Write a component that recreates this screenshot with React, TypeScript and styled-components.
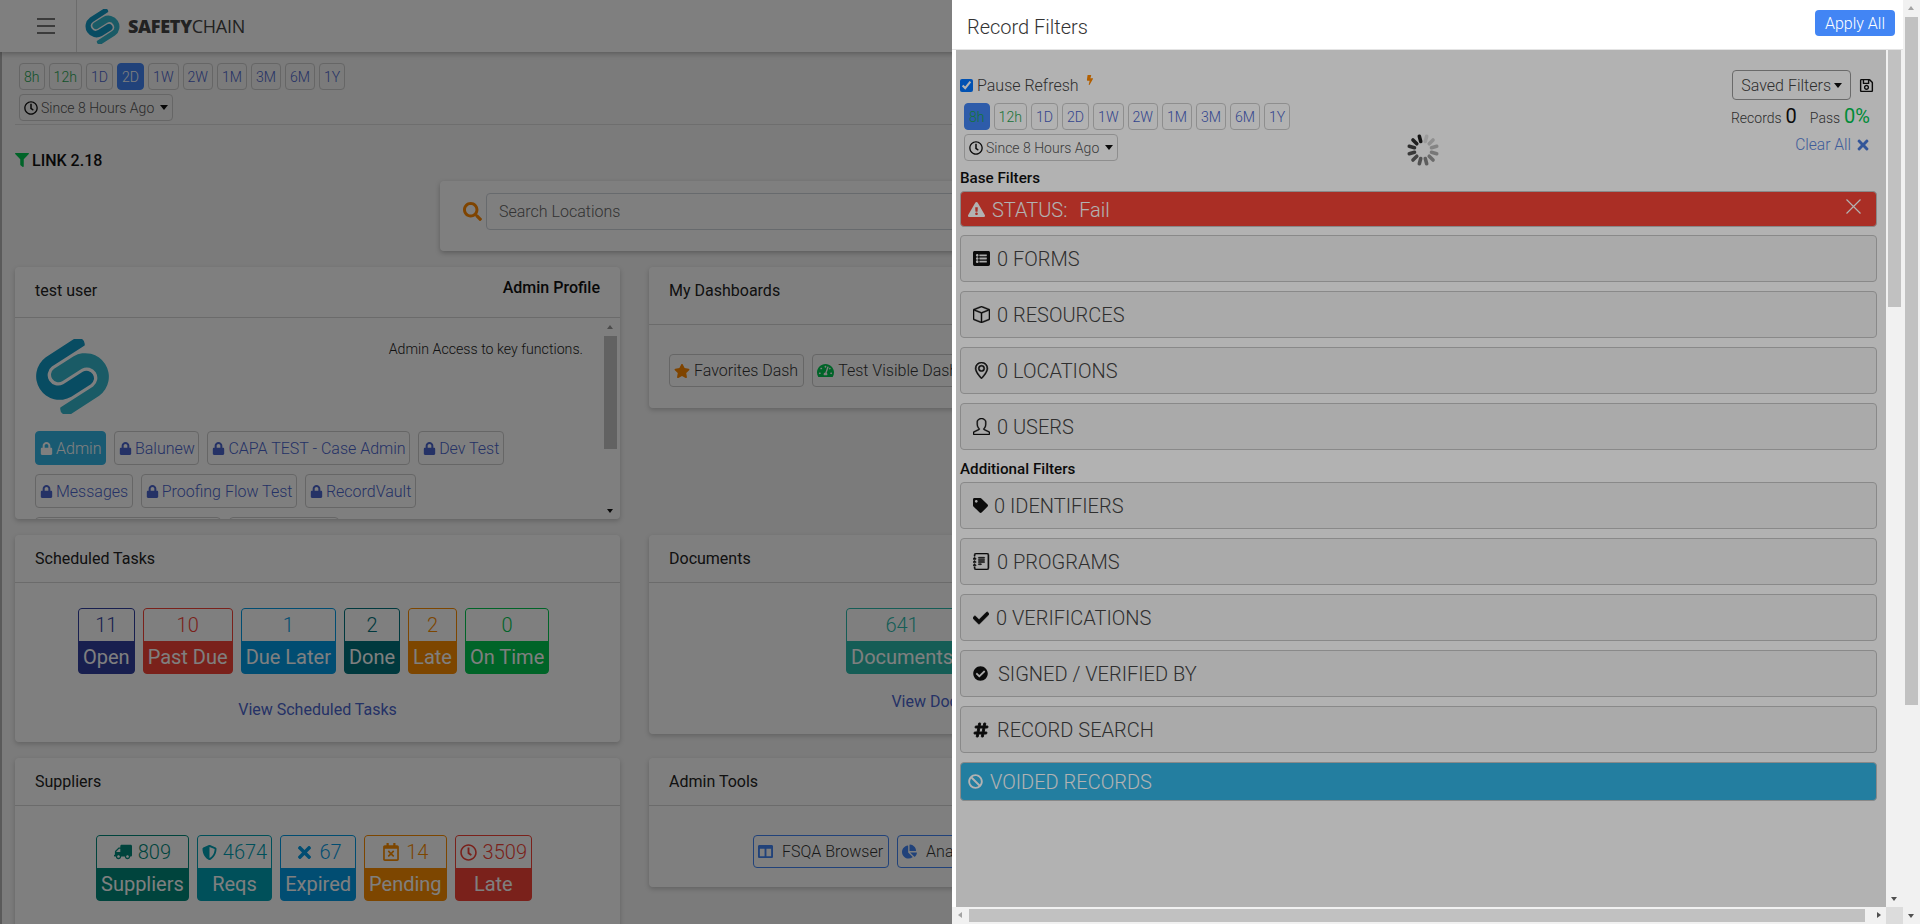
import React from "react";
import styled, { createGlobalStyle } from "styled-components";
import {
  FaLock, FaSearch, FaFilter, FaStar, FaTachometerAlt, FaTruck, FaShieldAlt, FaTimes,
  FaRegCalendarTimes, FaRegClock, FaRegSave, FaBolt, FaExclamationTriangle, FaListAlt,
  FaTag, FaCheck, FaCheckCircle, FaHashtag, FaBan, FaChartPie, FaColumns,
} from "react-icons/fa";
import { BsBox, BsGeoAlt, BsJournalText } from "react-icons/bs";
import { SlUser } from "react-icons/sl";

const Global = createGlobalStyle`
  html, body { margin: 0; padding: 0; height: 100%; overflow: hidden; }
  body { font-family: Roboto, "Liberation Sans", sans-serif; font-size: 16px; color: #212529; }
  * { box-sizing: border-box; }
`;

const BLUE = "#4a64cc";

const Root = styled.div`
  display: flex;
  width: 1920px;
  height: 924px;
  overflow: hidden;
`;
const Main = styled.div`
  position: relative;
  flex: 1;
  overflow: hidden;
  background: #f6f6f6;
`;
const TopBar = styled.header`
  display: flex;
  align-items: center;
  height: 52px;
  background: #fff;
  box-shadow: 0 2px 5px rgba(0, 0, 0, 0.25);
  position: relative;
`;
const MenuCell = styled.div`
  display: flex;
  flex-direction: column;
  justify-content: center;
  gap: 5px;
  width: 77px;
  height: 52px;
  padding-left: 37px;
  padding-right: 21px;
  border-right: 1px solid #d8d8d8;
  span { display: block; height: 2px; background: #777; }
`;
const Brand = styled.div`
  display: flex;
  align-items: center;
  gap: 8px;
  margin-left: 8px;
  font-family: "Open Sans", sans-serif;
  font-size: 18px;
  letter-spacing: -0.3px;
  color: #444;
  font-weight: 400;
  b { font-weight: 800; }
`;
const Content = styled.div`
  border-left: 2px solid #b4b4b4;
  padding-left: 13px;
  height: 872px;
`;
const RangeRow = styled.div<{ $top: number }>`
  display: flex;
  gap: 4px;
  padding: ${(p) => p.$top}px 0 0 4px;
`;
const RangeBtn = styled.div<{ $active?: boolean; $green?: boolean; $onActive?: string }>`
  display: flex;
  align-items: center;
  height: 27px;
  padding: 0 4px;
  border: 1px solid ${(p) => (p.$active ? "#4285f4" : "#ccc")};
  border-radius: 4px;
  font-size: 14.1px;
  font-weight: 300;
  background: ${(p) => (p.$active ? "#4285f4" : "transparent")};
  color: ${(p) => p.$onActive || (p.$active ? "#fff" : p.$green ? "#1fa552" : BLUE)};
`;
const SinceBtn = styled.div`
  display: inline-flex;
  align-items: center;
  gap: 3px;
  height: 27px;
  margin: 4px 0 0 4px;
  padding: 0 4px;
  border: 1px solid #ccc;
  border-radius: 4px;
  font-size: 14px;
  font-weight: 300;
  color: #555;
  svg { color: #111; }
`;
const Caret = styled.i`
  display: inline-block;
  width: 0;
  height: 0;
  margin-left: 3px;
  border-left: 4.5px solid transparent;
  border-right: 4.5px solid transparent;
  border-top: 5px solid #111;
`;
const HRule = styled.div`
  height: 1px;
  margin-top: 3px;
  background: #dcdcdc;
`;
const LinkRow = styled.div`
  display: flex;
  align-items: center;
  gap: 3px;
  height: 20px;
  margin-top: 25px;
  font-size: 16px;
  font-weight: 500;
  color: #111;
  svg { color: #00c851; }
`;
const SearchCard = styled.div`
  display: flex;
  align-items: center;
  gap: 4px;
  width: 1023px;
  height: 70px;
  margin: 11px 0 0 425px;
  padding: 0 23px 9px;
  background: #fff;
  border-radius: 4px;
  box-shadow: 0 2px 5px rgba(0, 0, 0, 0.25);
  svg { color: #ff8800; }
`;
const SearchBox = styled.div`
  flex: 1;
  display: flex;
  align-items: center;
  height: 37px;
  padding-left: 12px;
  border: 1px solid #ced4da;
  border-radius: 4px;
  font-size: 16px;
  font-weight: 300;
  color: #666;
`;
const Grid = styled.div`
  display: grid;
  grid-template-columns: 605px 605px;
  column-gap: 29px;
  row-gap: 16px;
  align-items: start;
  margin-top: 16px;
`;
const Card = styled.section<{ $height?: number }>`
  background: #fff;
  border-radius: 4px;
  box-shadow: 0 2px 5px rgba(0, 0, 0, 0.2);
  overflow: hidden;
  ${(p) => (p.$height ? `height: ${p.$height}px;` : "")}
`;
const CardHead = styled.div<{ $height: number }>`
  display: flex;
  justify-content: space-between;
  height: ${(p) => p.$height}px;
  padding: 12px 20px 0;
  border-bottom: 1px solid #d6d6d6;
  font-size: 16px;
  font-weight: 400;
  line-height: 24px;
  color: #222;
  b { font-weight: 500; font-size: 16px; line-height: 18px; margin-right: 0; color: #111; }
`;
const ProfileBody = styled.div`
  position: relative;
  display: flex;
  height: 201px;
  overflow: hidden;
`;
const ProfileMain = styled.div`
  flex: 1;
  padding: 21px 0 0 20px;
`;
const ProfileTop = styled.div`
  display: flex;
  justify-content: space-between;
  padding-right: 19px;
`;
const ProfileNote = styled.div`
  margin-top: 0;
  font-size: 14.2px;
  font-weight: 300;
  line-height: 20px;
  color: #222;
`;
const AppWrap = styled.div`
  display: flex;
  flex-wrap: wrap;
  gap: 9px 8px;
  margin-top: 17px;
  padding-right: 30px;
`;
const AppBtn = styled.div<{ $active?: boolean }>`
  display: flex;
  align-items: center;
  gap: 3px;
  height: 34px;
  padding: 0 3.5px 0 4px;
  border: 1px solid ${(p) => (p.$active ? "#33b5e5" : "#ccc")};
  border-radius: 4px;
  background: ${(p) => (p.$active ? "#33b5e5" : "transparent")};
  color: ${(p) => (p.$active ? "#fff" : BLUE)};
  font-size: 16px;
  font-weight: 300;
`;
const MiniBar = styled.div`
  position: relative;
  width: 18px;
  padding: 18px 3px 0 2px;
`;
const MiniThumb = styled.div`
  height: 113px;
  background: #c4c4c4;
`;
const MiniArrow = styled.i<{ $down?: boolean }>`
  position: absolute;
  left: 5px;
  ${(p) => (p.$down ? "bottom: 6px;" : "top: 7px;")}
  width: 0;
  height: 0;
  border-left: 3.5px solid transparent;
  border-right: 3.5px solid transparent;
  ${(p) => (p.$down ? "border-top: 4px solid #111;" : "border-bottom: 4px solid #999;")}
`;
const StatBody = styled.div<{ $left: number; $bottom: number; $top?: number }>`
  padding: ${(p) => p.$top ?? 25}px 0 ${(p) => p.$bottom}px ${(p) => p.$left}px;
`;
const StatRow = styled.div`
  display: flex;
  gap: 8px;
`;
const Stat = styled.div<{ $c: string }>`
  display: flex;
  flex-direction: column;
  border: 1px solid ${(p) => p.$c};
  border-radius: 4px;
  overflow: hidden;
  color: ${(p) => p.$c};
  font-size: 20px;
  text-align: center;
  background: ${(p) => p.$c};
`;
const StatTop = styled.div`
  display: flex;
  align-items: center;
  justify-content: center;
  gap: 6px;
  height: 32px;
  padding: 0 4px;
  background: #fff;
  font-weight: 300;
`;
const FlippedTruck = styled(FaTruck)`
  transform: scaleX(-1);
`;
const StatLabel = styled.div`
  height: 32px;
  line-height: 32px;
  padding: 0 4px;
  color: #fff;
  font-weight: 400;
`;
const CenterLink = styled.div<{ $top: number }>`
  margin-top: ${(p) => p.$top}px;
  text-align: center;
  color: ${BLUE};
  font-size: 16px;
  font-weight: 400;
  line-height: 20px;
`;
const LinkBody = styled.div<{ $bottom: number }>`
  padding-bottom: ${(p) => p.$bottom}px;
`;
const ToolRow = styled.div<{ $top: number; $left: number; $bottom: number }>`
  display: flex;
  gap: 8px;
  padding: ${(p) => p.$top}px 0 ${(p) => p.$bottom}px ${(p) => p.$left}px;
`;
const ToolBtn = styled.div<{ $line?: string; $icon?: string; $gap: number }>`
  display: flex;
  align-items: center;
  gap: ${(p) => p.$gap}px;
  height: 33px;
  padding: 0 5px 0 4px;
  border: 1px solid ${(p) => p.$line || "#ccc"};
  border-radius: 4px;
  font-size: 16px;
  font-weight: 300;
  white-space: nowrap;
  color: #333;
  svg { color: ${(p) => p.$icon || "#333"}; }
`;
const Dim = styled.div`
  position: absolute;
  inset: 0;
  background: rgba(0, 0, 0, 0.5);
`;
const Drawer = styled.aside`
  position: absolute;
  top: 0;
  right: 0;
  bottom: 0;
  width: 951px;
  display: flex;
  flex-direction: column;
  background: #fff;
`;
const DrawerHead = styled.div`
  display: flex;
  align-items: center;
  justify-content: space-between;
  height: 50px;
  flex: none;
  padding: 0 8px 0 15px;
  border-bottom: 1px solid #e4e4e4;
  h2 { margin: 4px 0 0; font-size: 20px; font-weight: 300; color: #333; }
`;
const ApplyBtn = styled.div`
  display: flex;
  align-items: center;
  justify-content: center;
  width: 80px;
  height: 26px;
  margin-bottom: 3px;
  border-radius: 4px;
  background: #4285f4;
  color: #fff;
  font-size: 16px;
  font-weight: 300;
`;
const DrawerMiddle = styled.div`
  flex: 1;
  min-height: 0;
  display: flex;
  padding-left: 4px;
`;
const DrawerPane = styled.div`
  position: relative;
  flex: 1;
  overflow: hidden;
  padding: 0 9px 0 4px;
`;
const PaneShade = styled.div`
  position: absolute;
  inset: 0;
  background: rgba(0, 0, 0, 0.3);
`;
const SpinnerBox = styled.div`
  position: absolute;
  left: 450px;
  top: 83px;
  width: 34px;
  height: 34px;
`;
const TopSplit = styled.div`
  display: flex;
  justify-content: space-between;
`;
const LeftCol = styled.div`
  padding-top: 25px;
`;
const PauseRow = styled.label`
  display: flex;
  align-items: center;
  gap: 4px;
  height: 20px;
  font-size: 16px;
  font-weight: 300;
  color: #444;
  input { width: 13px; height: 13px; margin: 0; }
  svg { color: #ff8800; margin: -10px 0 0 2px; }
`;
const RightCol = styled.div`
  display: flex;
  flex-direction: column;
  align-items: flex-end;
  padding: 20px 3px 0 0;
`;
const SavedRow = styled.div`
  display: flex;
  align-items: center;
  gap: 8px;
  svg { color: #111; }
`;
const SavedBtn = styled.div`
  display: flex;
  align-items: center;
  height: 30px;
  padding: 0 8px;
  border: 1px solid #999;
  border-radius: 4px;
  font-size: 16px;
  font-weight: 300;
  color: #444;
`;
const CountRow = styled.div`
  display: flex;
  align-items: baseline;
  gap: 4px;
  margin: 2px 4px 0 0;
  font-size: 14px;
  font-weight: 300;
  color: #444;
  line-height: 28px;
`;
const CountVal = styled.span<{ $green?: boolean }>`
  font-size: 20px;
  font-weight: 400;
  margin-right: 9px;
  color: ${(p) => (p.$green ? "#00c851" : "#111")};
  &:last-child { margin-right: 0; }
`;
const ClearRow = styled.div`
  display: flex;
  align-items: center;
  gap: 4px;
  margin: 4px 3px 0 0;
  font-size: 15.6px;
  font-weight: 300;
  color: #5b86dd;
  svg { color: #4a7bdc; }
`;
const GroupLabel = styled.div<{ $top: number; $bottom: number }>`
  height: 20px;
  line-height: 20px;
  margin: ${(p) => p.$top}px 0 ${(p) => p.$bottom}px;
  font-size: 15.2px;
  font-weight: 500;
  color: #111;
`;
const Tile = styled.div<{ $gap?: number }>`
  display: flex;
  align-items: center;
  gap: ${(p) => p.$gap ?? 7}px;
  height: 47px;
  margin-bottom: 9px;
  padding-left: 12px;
  border: 1px solid #c4c4c4;
  border-radius: 4px;
  background: #f4f4f4;
  font-size: 20px;
  font-weight: 300;
  color: #444;
  white-space: nowrap;
  svg { color: #111; flex: none; }
`;
const StatusTile = styled.div`
  display: flex;
  align-items: center;
  justify-content: space-between;
  height: 36px;
  margin-bottom: 8px;
  padding: 1px 15px 0 7px;
  border: 1px solid #c4c4c4;
  border-radius: 4px;
  background: #f44336;
  color: #fff;
  font-size: 20px;
  font-weight: 300;
  span { display: flex; align-items: center; gap: 7px; white-space: pre; word-spacing: 1px; }
  > svg { margin-top: -6px; }
`;
const VoidTile = styled.div`
  display: flex;
  align-items: center;
  gap: 7px;
  height: 39px;
  margin-top: 1px;
  padding: 0 0 0 7px;
  border: 1px solid #c4c4c4;
  border-radius: 4px;
  background: #33b5e5;
  color: #fff;
  font-size: 20px;
  font-weight: 300;
`;
const BarV = styled.div<{ $pad: number }>`
  position: relative;
  flex: none;
  width: 17px;
  padding: ${(p) => p.$pad}px 2px 0;
  background: #f1f1f1;
`;
const ThumbV = styled.div<{ $h: number }>`
  height: ${(p) => p.$h}px;
  background: #c1c1c1;
`;
const BarArrowV = styled.i<{ $down?: boolean }>`
  position: absolute;
  left: 5px;
  ${(p) => (p.$down ? "bottom: 6px;" : "top: 6px;")}
  width: 0;
  height: 0;
  border-left: 3.5px solid transparent;
  border-right: 3.5px solid transparent;
  ${(p) => (p.$down ? "border-top: 4px solid #505050;" : "border-bottom: 4px solid #a3a3a3;")}
`;
const BarH = styled.div`
  position: relative;
  flex: none;
  display: flex;
  height: 17px;
  background: #f1f1f1;
`;
const ThumbH = styled.div`
  width: 896px;
  height: 13px;
  margin: 2px 0 0 17px;
  background: #c1c1c1;
`;
const ArrowH = styled.i<{ $right?: boolean }>`
  position: absolute;
  top: 5px;
  ${(p) => (p.$right ? "right: 22px;" : "left: 6px;")}
  width: 0;
  height: 0;
  border-top: 3.5px solid transparent;
  border-bottom: 3.5px solid transparent;
  ${(p) => (p.$right ? "border-left: 4px solid #505050;" : "border-right: 4px solid #a3a3a3;")}
`;
const Corner = styled.div`
  position: absolute;
  right: 0;
  top: 0;
  width: 17px;
  height: 17px;
  background: #dcdcdc;
`;

const HOOK =
  "M66.2 8.7 A9 9 0 0 0 51.4 .4 L14.4 24.2 A31.5 31.5 0 0 0 48.4 77.1 L74.5 60.4 A10 10 0 0 0 63.7 43.6 L37.6 60.3 A14 14 0 0 1 22.5 36.8 Z";

const LogoMark = ({ size }: { size: number }) => (
  <svg width={size} height={size} viewBox="0 0 100 100">
    <path d={HOOK} fill="#1098c4" />
    <path d={HOOK} fill="#34b6cc" transform="rotate(180 50 50)" />
  </svg>
);

const Spinner = () => (
  <svg width="34" height="34" viewBox="0 0 34 34">
    {Array.from({ length: 12 }).map((_, i) => (
      <rect key={i} x="15.2" y="1" width="3.6" height="9" rx="1.8" fill="#000"
        opacity={0.12 + 0.07 * i} transform={`rotate(${15 + i * 30} 17 17)`} />
    ))}
  </svg>
);

const RANGES = ["8h", "12h", "1D", "2D", "1W", "2W", "1M", "3M", "6M", "1Y"];

const Ranges = ({ active, top, keepColor }: { active: string; top: number; keepColor?: boolean }) => (
  <RangeRow $top={top}>
    {RANGES.map((r) => (
      <RangeBtn key={r} $active={r === active} $green={r === "8h" || r === "12h"}
        $onActive={keepColor && r === active ? "#1fa552" : undefined}>{r}</RangeBtn>
    ))}
  </RangeRow>
);

const Since = () => (
  <SinceBtn><FaRegClock size={14} /> Since 8 Hours Ago<Caret /></SinceBtn>
);

const TASKS = [
  ["11", "Open", "#303f9f"], ["10", "Past Due", "#f44336"], ["1", "Due Later", "#039be5"],
  ["2", "Done", "#00737d"], ["2", "Late", "#fb8c00"], ["0", "On Time", "#00c851"],
];
const APPS = ["Admin", "Balunew", "CAPA TEST - Case Admin", "Dev Test", "Messages", "Proofing Flow Test", "RecordVault", "Supplier Portal Admins", "Sanitation A"];

export default function App() {
  return (
    <Root>
      <Global />
      <Main>
        <TopBar>
          <MenuCell><span /><span /><span /></MenuCell>
          <Brand>
            <LogoMark size={35} />
            <div><b>SAFETY</b>CHAIN</div>
          </Brand>
        </TopBar>
        <Content>
          <Ranges active="2D" top={11} />
          <Since />
          <HRule />
          <LinkRow><FaFilter size={14} />LINK 2.18</LinkRow>
          <SearchCard>
            <FaSearch size={19} />
            <SearchBox>Search Locations</SearchBox>
          </SearchCard>
          <Grid>
            <Card $height={252}>
              <CardHead $height={51}><span>test user</span><b>Admin Profile</b></CardHead>
              <ProfileBody>
                <ProfileMain>
                  <ProfileTop>
                    <LogoMark size={75} />
                    <ProfileNote>Admin Access to key functions.</ProfileNote>
                  </ProfileTop>
                  <AppWrap>
                    {APPS.map((a, i) => (
                      <AppBtn key={a} $active={i === 0}><FaLock size={13} />{a}</AppBtn>
                    ))}
                  </AppWrap>
                </ProfileMain>
                <MiniBar><MiniArrow /><MiniThumb /><MiniArrow $down /></MiniBar>
              </ProfileBody>
            </Card>
            <Card>
              <CardHead $height={58}>My Dashboards</CardHead>
              <ToolRow $top={29} $left={20} $bottom={21}>
                <ToolBtn $icon="#ff8800" $gap={4}><FaStar size={16} />Favorites Dash</ToolBtn>
                <ToolBtn $icon="#00c851" $gap={4}><FaTachometerAlt size={17} />Test Visible Dashboard</ToolBtn>
              </ToolRow>
            </Card>
            <Card>
              <CardHead $height={48}>Scheduled Tasks</CardHead>
              <LinkBody $bottom={22}>
                <StatBody $left={63} $bottom={0}>
                  <StatRow>
                    {TASKS.map(([n, l, c]) => (
                      <Stat key={l} $c={c}><StatTop>{n}</StatTop><StatLabel>{l}</StatLabel></Stat>
                    ))}
                  </StatRow>
                </StatBody>
                <CenterLink $top={26}>View Scheduled Tasks</CenterLink>
              </LinkBody>
            </Card>
            <Card>
              <CardHead $height={48}>Documents</CardHead>
              <LinkBody $bottom={22}>
                <StatBody $left={197} $bottom={0}>
                  <StatRow>
                    <Stat $c="#2bbbad"><StatTop>641</StatTop><StatLabel>Documents</StatLabel></Stat>
                  </StatRow>
                </StatBody>
                <CenterLink $top={18}>View Documents</CenterLink>
              </LinkBody>
            </Card>
            <Card>
              <CardHead $height={48}>Suppliers</CardHead>
              <StatBody $left={81} $top={29} $bottom={40}>
                <StatRow>
                  <Stat $c="#00897b"><StatTop><FlippedTruck size={18} />809</StatTop><StatLabel>Suppliers</StatLabel></Stat>
                  <Stat $c="#00a0b4"><StatTop><FaShieldAlt size={15} />4674</StatTop><StatLabel>Reqs</StatLabel></Stat>
                  <Stat $c="#039be5"><StatTop><FaTimes size={19} />67</StatTop><StatLabel>Expired</StatLabel></Stat>
                  <Stat $c="#fb8c00"><StatTop><FaRegCalendarTimes size={18} />14</StatTop><StatLabel>Pending</StatLabel></Stat>
                  <Stat $c="#f44336"><StatTop><FaRegClock size={17} />3509</StatTop><StatLabel>Late</StatLabel></Stat>
                </StatRow>
              </StatBody>
            </Card>
            <Card>
              <CardHead $height={48}>Admin Tools</CardHead>
              <ToolRow $top={29} $left={104} $bottom={19}>
                <ToolBtn $line="#4285f4" $icon="#4285f4" $gap={9}><FaColumns size={15} />FSQA Browser</ToolBtn>
                <ToolBtn $line="#4285f4" $icon="#4285f4" $gap={9}><FaChartPie size={15} />Analytics</ToolBtn>
              </ToolRow>
            </Card>
          </Grid>
        </Content>
        <Dim />
        <Drawer>
          <DrawerHead><h2>Record Filters</h2><ApplyBtn>Apply All</ApplyBtn></DrawerHead>
          <DrawerMiddle>
            <DrawerPane>
              <TopSplit>
                <LeftCol>
                  <PauseRow>
                    <input type="checkbox" checked readOnly />
                    Pause Refresh
                    <FaBolt size={10} />
                  </PauseRow>
                  <Ranges active="8h" top={8} keepColor />
                  <Since />
                </LeftCol>
                <RightCol>
                  <SavedRow>
                    <SavedBtn>Saved Filters<Caret /></SavedBtn>
                    <FaRegSave size={15} />
                  </SavedRow>
                  <CountRow>Records <CountVal>0</CountVal> Pass <CountVal $green>0%</CountVal></CountRow>
                  <ClearRow>Clear All <FaTimes size={16} /></ClearRow>
                </RightCol>
              </TopSplit>
              <GroupLabel $top={7} $bottom={3}>Base Filters</GroupLabel>
              <StatusTile>
                <span><FaExclamationTriangle size={17} />{"STATUS:  Fail"}</span>
                <svg width="15" height="15" viewBox="0 0 15 15" stroke="#fff" strokeWidth="1.2"><path d="M0.5 0.5 L14.5 14.5 M14.5 0.5 L0.5 14.5" /></svg>
              </StatusTile>
              <Tile><FaListAlt size={17} />0 FORMS</Tile>
              <Tile><BsBox size={17} stroke="currentColor" strokeWidth={0.4} />0 RESOURCES</Tile>
              <Tile><BsGeoAlt size={17} stroke="currentColor" strokeWidth={0.5} />0 LOCATIONS</Tile>
              <Tile><SlUser size={17} stroke="currentColor" strokeWidth={20} />0 USERS</Tile>
              <GroupLabel $top={6} $bottom={3}>Additional Filters</GroupLabel>
              <Tile $gap={6}><FaTag size={15} />0 IDENTIFIERS</Tile>
              <Tile><BsJournalText size={17} stroke="currentColor" strokeWidth={0.5} />0 PROGRAMS</Tile>
              <Tile><FaCheck size={16} stroke="currentColor" strokeWidth={30} />0 VERIFICATIONS</Tile>
              <Tile $gap={10}><FaCheckCircle size={15} />SIGNED / VERIFIED BY</Tile>
              <Tile $gap={8}><FaHashtag size={16} stroke="currentColor" strokeWidth={30} />RECORD SEARCH</Tile>
              <VoidTile><FaBan size={15} />VOIDED RECORDS</VoidTile>
              <PaneShade />
              <SpinnerBox><Spinner /></SpinnerBox>
            </DrawerPane>
            <BarV $pad={0}><ThumbV $h={257} /><BarArrowV $down /></BarV>
          </DrawerMiddle>
          <BarH>
            <ArrowH /><ThumbH /><ArrowH $right /><Corner />
          </BarH>
        </Drawer>
      </Main>
      <BarV $pad={17}><BarArrowV /><ThumbV $h={688} /><BarArrowV $down /></BarV>
    </Root>
  );
}
